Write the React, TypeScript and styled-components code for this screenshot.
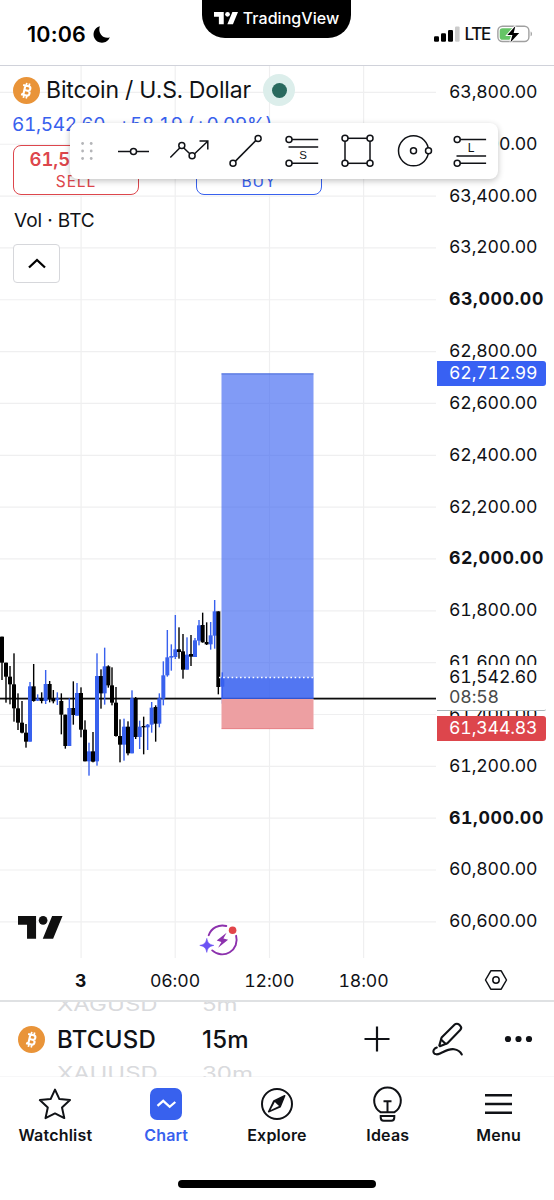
import React from "react";
import styled, { createGlobalStyle } from "styled-components";

const BLUE = "#3861ee";
const RED = "#dd464c";
const INK = "#101216";

const GlobalStyle = createGlobalStyle`
  *, *::before, *::after { box-sizing: border-box; }
  html, body { margin: 0; padding: 0; background: #fff; }
  body {
    font-family: Inter, "Liberation Sans", sans-serif;
    font-variant-numeric: tabular-nums;
    color: ${INK};
  }
  svg { display: block; flex: none; overflow: visible; }
`;

/* ---------- screen ---------- */

const Screen = styled.div`
  width: 554px;
  height: 1200px;
  display: flex;
  flex-direction: column;
  overflow: hidden;
  background: #fff;
`;

const StatusBar = styled.header`
  height: 66px;
  display: flex;
  justify-content: space-between;
  align-items: flex-start;
  padding: 0 21px 0 27px;
  border-bottom: 1px solid #d0d2da;
`;

const StatusSide = styled.div<{ $gap: number; $end?: boolean }>`
  display: flex;
  align-items: center;
  justify-content: ${(p) => (p.$end ? "flex-end" : "flex-start")};
  gap: ${(p) => p.$gap}px;
  height: 68px;
  width: 118px;
  flex: none;
`;

const Clock = styled.span`
  font-size: 21.5px;
  font-weight: 600;
  font-variant-numeric: normal;
  letter-spacing: 0.2px;
  width: 59px;
  color: #000;
`;

const Network = styled.span`
  font-size: 17px;
  font-weight: 500;
  letter-spacing: -1.3px;
  color: #111;
  margin-right: 2px;
`;

const Island = styled.div`
  width: 149px;
  height: 38px;
  margin-right: 7px;
  border-radius: 0 0 23px 23px;
  background: #000;
  color: #fff;
  display: flex;
  align-items: center;
  justify-content: center;
  gap: 5px;
  padding-bottom: 2px;
  font-size: 16px;
  font-weight: 500;
  letter-spacing: 0.05px;
  white-space: nowrap;
`;

/* ---------- chart ---------- */

const ChartPanel = styled.main`
  height: 936px;
  display: grid;
  grid-template-columns: 437px 117px;
  grid-template-rows: 892px 44px;
  border-bottom: 2px solid #dfe1e3;
`;

const Plot = styled.section`
  position: relative;
`;

const Legend = styled.div`
  position: absolute;
  top: 0;
  left: 0;
  width: 437px;
  padding: 8px 0 0 13px;
  display: flex;
  flex-direction: column;
  align-items: flex-start;
`;

const TitleRow = styled.div`
  display: flex;
  align-items: center;
  height: 32px;
`;

const Title = styled.h1`
  margin: 0 12px 0 6px;
  width: 205px;
  font-size: 23px;
  font-weight: 400;
  letter-spacing: -0.15px;
  white-space: nowrap;
`;

const Status = styled.span`
  width: 32px;
  height: 32px;
  border-radius: 50%;
  background: #dceeeb;
  display: grid;
  place-items: center;
  &::after {
    content: "";
    width: 15px;
    height: 15px;
    border-radius: 50%;
    background: #29695e;
  }
`;

const QuoteRow = styled.div`
  display: flex;
  gap: 12px;
  align-items: center;
  height: 36px;
  padding-top: 1px;
  margin-left: -1px;
  font-size: 19px;
  letter-spacing: -0.35px;
  color: ${BLUE};
  white-space: nowrap;
`;

const Quote = styled.span<{ $w: number }>`
  width: ${(p) => p.$w}px;
`;

const OrderRow = styled.div`
  display: flex;
  gap: 57px;
  margin-top: 3px;
`;

const OrderButton = styled.button<{ $color: string }>`
  width: 126px;
  height: 50px;
  padding: 2px 0 0;
  border: 1.5px solid ${(p) => p.$color};
  border-radius: 8px;
  background: #fff;
  color: ${(p) => p.$color};
  font-family: inherit;
  font-variant-numeric: inherit;
  display: flex;
  flex-direction: column;
  align-items: center;
  b { font-size: 18.5px; line-height: 23px; font-weight: 600; letter-spacing: -0.1px; }
  span { font-size: 15.5px; line-height: 21px; letter-spacing: 0.9px; }
`;

const Indicator = styled.div`
  height: 49px;
  line-height: 51px;
  font-size: 19px;
  margin-left: 1px;
`;

const Collapse = styled.button`
  width: 47px;
  height: 39px;
  padding: 0;
  border: 1.5px solid #d6d7db;
  border-radius: 4px;
  background: #fff;
  display: grid;
  place-items: center;
`;

const Toolbar = styled.div`
  position: absolute;
  z-index: 2;
  top: 57px;
  left: 69.5px;
  width: 428px;
  height: 56px;
  border-radius: 8px;
  background: #fff;
  box-shadow: 0 2px 6px rgba(0, 0, 0, 0.24);
  display: flex;
`;

const Grip = styled.div`
  width: 35px;
  display: grid;
  place-items: center;
`;

const Tool = styled.button`
  width: 56px;
  padding: 0;
  border: 0;
  background: none;
  display: grid;
  place-items: center;
`;

const Watermark = styled.div`
  position: absolute;
  left: 17.5px;
  bottom: 19px;
`;

const EventBadge = styled.div`
  position: absolute;
  left: 198px;
  bottom: -2px;
`;

const PriceAxis = styled.aside`
  position: relative;
  display: flex;
  flex-direction: column;
  overflow: hidden;
`;

const Price = styled.span<{ $bold: boolean }>`
  flex: none;
  height: 51.84px;
  line-height: 51.2px;
  padding-left: 12px;
  font-size: 17.7px;
  letter-spacing: ${(p) => (p.$bold ? 0.6 : -0.15)}px;
  font-weight: ${(p) => (p.$bold ? 700 : 400)};
  white-space: nowrap;
`;

const PriceTag = styled.span<{ $top: number; $bg: string }>`
  position: absolute;
  left: 0;
  top: ${(p) => p.$top}px;
  width: 109px;
  height: 25px;
  line-height: 24px;
  padding-left: 12px;
  border-radius: 0 3px 3px 0;
  background: ${(p) => p.$bg};
  color: #fff;
  font-size: 17.7px;
  letter-spacing: -0.15px;
`;

const LastPrice = styled.div`
  position: absolute;
  left: 0;
  top: 599px;
  width: 109px;
  height: 46px;
  padding: 1.5px 0 0 12px;
  background: #fff;
  border-bottom: 1px solid #aab5b8;
  border-radius: 0 0 2px 0;
  font-size: 17.7px;
  line-height: 20.5px;
  letter-spacing: -0.15px;
  display: flex;
  flex-direction: column;
  span:last-child { color: #4a4a4a; }
`;

const TimeAxis = styled.div`
  display: flex;
  padding-left: 33.5px;
`;

const Time = styled.span<{ $bold?: boolean }>`
  width: 94.3px;
  text-align: center;
  line-height: 46px;
  font-size: 17.7px;
  letter-spacing: -0.1px;
  font-weight: ${(p) => (p.$bold ? 700 : 400)};
`;

const AxisSettings = styled.div`
  display: grid;
  place-items: center;
`;

/* ---------- symbol picker ---------- */

const PickerBar = styled.section`
  height: 75px;
  display: flex;
  align-items: center;
  padding-left: 18px;
  border-bottom: 1px solid #f7f7f8;
`;

const Wheel = styled.div<{ $w: number; $ml: number }>`
  width: ${(p) => p.$w}px;
  height: 75px;
  padding-top: 2px;
  margin-left: ${(p) => p.$ml}px;
  overflow: hidden;
  display: flex;
  flex-direction: column;
  justify-content: center;
`;

const WheelItem = styled.span<{ $active?: boolean }>`
  flex: none;
  height: 34.5px;
  line-height: 34.5px;
  font-size: 24px;
  font-variant-numeric: normal;
  font-weight: ${(p) => (p.$active ? 500 : 400)};
  letter-spacing: ${(p) => (p.$active ? 0.25 : 0)}px;
  color: ${(p) => (p.$active ? INK : "#d9dadd")};
  transform: scaleY(${(p) => (p.$active ? 1 : 0.75)});
`;

const Actions = styled.div`
  margin-left: auto;
  display: flex;
  align-items: center;
  padding-right: 21px;
  gap: 41.3px;
`;

/* ---------- tab bar ---------- */

const TabBar = styled.nav`
  display: grid;
  grid-template-columns: repeat(5, 1fr);
  height: 103px;
`;

const Tab = styled.a<{ $active?: boolean }>`
  display: flex;
  flex-direction: column;
  align-items: center;
  padding-top: 10px;
  gap: 4px;
  font-size: 16px;
  line-height: 20px;
  font-weight: 600;
  letter-spacing: 0.2px;
  color: ${(p) => (p.$active ? BLUE : INK)};
`;

const HomeIndicator = styled.div`
  width: 198px;
  height: 8px;
  margin: 0 auto;
  border-radius: 4px;
  background: #000;
`;

/* ---------- icons ---------- */

const line = { fill: "none", stroke: INK, strokeWidth: 1.5 } as const;

const BrandMark = ({ width, color }: { width: number; color: string }) => (
  <svg width={width} height={(width * 68) / 133} viewBox="0 0 133 68" fill={color}>
    <path d="M0 0h54v68H27V26H0zM102 0h31l-28 68H74z" />
    <circle cx="75" cy="13" r="13" />
  </svg>
);

const BitcoinIcon = () => (
  <svg width="27" height="27" viewBox="0 0 27 27">
    <circle cx="13.5" cy="13.5" r="13.5" fill="#e99439" />
    <g transform="rotate(13 13.5 13.5)" fill="none" stroke="#fff" strokeWidth="2.1">
      <path d="M9 8.9h5.6a2.2 2.2 0 0 1 0 4.5H11.3M14.6 13.4a2.5 2.5 0 0 1 0 5H9M11.3 8.9v9.5" />
      <path d="M12.1 6v3M15 6v3M12.1 18.4v3M15 18.4v3" strokeWidth="1.7" />
    </g>
  </svg>
);

const Moon = () => (
  <svg width="17" height="17" viewBox="0 0 17 17">
    <path d="M6.8.2A8.4 8.4 0 1 0 16.8 11.2C11.500 13.400 4.300 8.200 6.800.2z" fill="#000" />
  </svg>
);

const Signal = () => (
  <svg width="26" height="16" viewBox="0 0 26 16" fill="#000">
    <rect x="0" y="10.3" width="5" height="5.5" rx="1.2" />
    <rect x="7" y="7.3" width="5" height="8.5" rx="1.2" />
    <rect x="14" y="4" width="5" height="11.8" rx="1.2" />
    <rect x="21" y="0.4" width="4.6" height="15.4" rx="1.2" fill="#cbcbcb" />
  </svg>
);

const Battery = () => (
  <svg width="36" height="18" viewBox="0 0 36 18">
    <rect x="0.9" y="1.3" width="31" height="15.2" rx="4.5" fill="#fff" stroke="#a0a0a0" strokeWidth="1.4" />
    <path d="M33.6 6.5c1.8.5 1.8 4.3 0 4.8z" fill="#a0a0a0" />
    <path d="M5.5 3.2H17L12.5 14.7h-7a2.8 2.8 0 0 1-2.8-2.8V6a2.8 2.8 0 0 1 2.8-2.8z" fill="#65c466" />
    <path d="M18.4.9 10.3 10h5.1l-2 7.5 8.8-9.6h-5.5z" fill="#000" stroke="#fff" strokeWidth="1.8" paintOrder="stroke" />
  </svg>
);

const Knob = ({ x, y }: { x: number; y: number }) => (
  <circle cx={x} cy={y} r="3" fill="#fff" stroke={INK} strokeWidth="1.5" />
);

const GripDots = () => (
  <svg width="12" height="18" viewBox="0 0 12 18" fill="#b4b5b8">
    {[1.5, 9, 16.5].map((y) => (
      <React.Fragment key={y}>
        <circle cx="1.6" cy={y} r="1.4" />
        <circle cx="10.2" cy={y} r="1.4" />
      </React.Fragment>
    ))}
  </svg>
);

const toolIcons: { name: string; art: React.ReactNode }[] = [
  {
    name: "Horizontal line",
    art: (
      <>
        <path d="M5 20.5h31" {...line} />
        <Knob x={20.5} y={20.5} />
      </>
    ),
  },
  {
    name: "Path",
    art: (
      <>
        <path d="M1.3 26.5 12.7 15l10.5 10L38.5 10.5M30.5 10h8.3v8.5" {...line} />
        <Knob x={12.8} y={14.5} />
        <Knob x={23.1} y={24.8} />
      </>
    ),
  },
  {
    name: "Trend line",
    art: (
      <>
        <path d="M8 32.6 32.8 7.6" {...line} />
        <Knob x={8} y={32.3} />
        <Knob x={33.1} y={7.4} />
      </>
    ),
  },
  {
    name: "Short position",
    art: (
      <>
        <path d="M8.2 8.5h29M7.500 16h29.7M8.2 32.3h29" {...line} />
        <Knob x={8} y={8.5} />
        <Knob x={8} y={32.3} />
        <text x="22.2" y="28.2" textAnchor="middle" fontSize="11.5" fontWeight="500" fill={INK}>S</text>
      </>
    ),
  },
  {
    name: "Rectangle",
    art: (
      <>
        <rect x="8" y="7.3" width="25" height="25" {...line} />
        <Knob x={8} y={7.3} />
        <Knob x={33} y={7.3} />
        <Knob x={8} y={32.3} />
        <Knob x={33} y={32.3} />
      </>
    ),
  },
  {
    name: "Circle",
    art: (
      <>
        <circle cx="20.5" cy="19.8" r="15" {...line} />
        <Knob x={20.5} y={19.8} />
        <Knob x={35.5} y={19.8} />
      </>
    ),
  },
  {
    name: "Long position",
    art: (
      <>
        <path d="M8.300 8.5h28.8M7.500 25h29.6M8.300 32.3h28.8" {...line} />
        <Knob x={8.2} y={8.5} />
        <Knob x={8.2} y={32.3} />
        <text x="22.2" y="21" textAnchor="middle" fontSize="12" fontWeight="500" fill={INK}>L</text>
      </>
    ),
  },
];

const EventIcon = () => (
  <svg width="44" height="40" viewBox="0 0 44 40">
    <g fill="none" stroke="#8c31ad" strokeWidth="1.9">
      <path d="M10.7 15.2A14.5 14.5 0 0 1 28.3 6" strokeLinecap="round" />
      <path d="M38.1 15.8A14.5 14.5 0 0 1 14.2 30.4" strokeLinecap="round" />
    </g>
    <path d="M28.6 12.8 18.7 20.6l4.7 1.4-3.3 5.8 10-8-4.7-1.3z" fill="#8c31ad" />
    <circle cx="34.6" cy="10.2" r="3.8" fill="#e2454a" />
    <path d="M8.8 18.4c1 4.6 2.4 6 7 7-4.6 1-6 2.4-7 7-1-4.6-2.4-6-7-7 4.6-1 6-2.4 7-7z" fill="#6b52f4" stroke="#6b52f4" strokeWidth=".6" />
  </svg>
);

const HexIcon = () => (
  <svg width="24" height="22" viewBox="0 0 24 22" {...line}>
    <path d="M6.8 1.8h10.4L22.5 11l-5.3 9.2H6.8L1.5 11z" strokeLinejoin="round" />
    <circle cx="12" cy="11" r="3.2" />
  </svg>
);

const PlusIcon = () => (
  <svg width="26" height="26" viewBox="0 0 26 26">
    <path d="M13 .5v25M.5 13h25" {...line} strokeWidth={2.2} />
  </svg>
);

const PenIcon = () => (
  <svg width="32" height="34" viewBox="0 0 32 34">
    <g {...line} strokeWidth={2.1} strokeLinejoin="round" strokeLinecap="round">
      <path d="M9.6 15.5 22.7 2.6a3 3 0 0 1 4.3 0l1.2 1.2a3 3 0 0 1 0 4.2L15.4 21.3l-7.5 2.9-.6-.6z" />
      <path d="m9 17.5 4.8 4.4" />
      <path d="M4.8 25.6c-2.8 1-4 3-3.2 5 1 2.4 4 2 7 .6 4.4-2.1 8.4-4.7 13.4-4 3.8.5 6.5 2.6 7.8 5.3" />
    </g>
  </svg>
);

const DotsIcon = () => (
  <svg width="28" height="8" viewBox="0 0 28 8" fill={INK}>
    <circle cx="3" cy="4" r="3.1" />
    <circle cx="13.5" cy="4" r="3.1" />
    <circle cx="24" cy="4" r="3.1" />
  </svg>
);

const StarIcon = () => (
  <svg width="34" height="34" viewBox="0 0 34 34">
    <path d="m17 2.6 4.4 9.5 10.6 1-8 7.4 2.3 10.6L17 26.4l-9.5 4.7 2.3-10.6-8-7.4 10.8-1z" {...line} strokeWidth={2} strokeLinejoin="round" />
  </svg>
);

const ChartIcon = () => (
  <svg width="34" height="34" viewBox="0 0 34 34">
    <rect x="1" y="1" width="32" height="32" rx="7" fill={BLUE} />
    <path d="m8.5 18.8 5.7-5 6.5 6 5.6-4.8" fill="none" stroke="#fff" strokeWidth="2.3" />
  </svg>
);

const CompassIcon = () => (
  <svg width="34" height="34" viewBox="0 0 34 34">
    <circle cx="17" cy="17" r="15" {...line} strokeWidth={2} />
    <path d="m8.6 24.8 5.3-10.9 10.8-5.2-4.5 11z" fill={INK} stroke={INK} strokeWidth="1.5" strokeLinejoin="round" />
    <path d="m10.6 23 4.2-8 4.2 4z" fill="#fff" />
  </svg>
);

const BulbIcon = () => (
  <svg width="34" height="34" viewBox="0 0 34 34">
    <g {...line} strokeWidth={2}>
      <path d="M9.5 25.2A13.3 13.3 0 1 1 23.5 25.2zM12.5 14.2h8M16.5 14.2v11" />
      <path d="M9.7 29h13.6v1.5c0 2.2-.8 3.2-3 3.2h-7.6c-2.2 0-3-1-3-3.2z" />
    </g>
  </svg>
);

const MenuIcon = () => (
  <svg width="34" height="34" viewBox="0 0 34 34">
    <path d="M3 8.3h27M3 17h27M3 25.8h27" {...line} strokeWidth={2.4} />
  </svg>
);

/* ---------- chart data ---------- */

// [x, wick top, wick bottom, body top, body bottom, rising], in thirds of a pixel
type Candle = [number, number, number, number, number, 0 | 1];
const candles: Candle[] = [
  [6, 140, 270, 140, 218, 0], [18, 218, 338, 218, 260, 0], [30, 228, 343, 260, 283, 0],
  [42, 190, 395, 283, 355, 0], [54, 310, 420, 355, 398, 0], [66, 333, 430, 398, 428, 0],
  [78, 402, 473, 428, 455, 0], [90, 276, 455, 289, 455, 1], [101, 222, 335, 289, 333, 0],
  [113, 313, 333, 326, 332, 1], [125, 307, 340, 324, 333, 0], [137, 240, 342, 282, 333, 1],
  [149, 273, 337, 282, 328, 0], [160, 300, 340, 326, 334, 0], [172, 307, 345, 325, 330, 1],
  [184, 310, 433, 333, 374, 0], [196, 374, 476, 374, 468, 0], [208, 325, 468, 354, 468, 1],
  [220, 274, 404, 354, 375, 0], [231, 279, 377, 309, 377, 1], [243, 292, 442, 309, 419, 0],
  [255, 391, 514, 419, 514, 0], [267, 458, 557, 484, 514, 1], [279, 426, 517, 484, 515, 0],
  [291, 190, 527, 258, 514, 1], [303, 238, 356, 258, 310, 0], [314, 173, 344, 229, 310, 1],
  [325, 226, 293, 229, 286, 0], [336, 232, 346, 286, 338, 0], [348, 291, 440, 338, 438, 0],
  [360, 388, 517, 438, 464, 0], [372, 386, 512, 410, 464, 1], [384, 394, 496, 410, 490, 0],
  [396, 301, 490, 325, 490, 1], [407, 321, 447, 325, 441, 0], [419, 392, 477, 410, 441, 1],
  [431, 380, 493, 408, 412, 0], [443, 402, 480, 404, 412, 1], [455, 336, 428, 353, 404, 1],
  [467, 346, 455, 351, 401, 0], [478, 310, 412, 325, 401, 1], [490, 214, 346, 256, 326, 1],
  [502, 120, 260, 202, 256, 1], [514, 163, 242, 198, 203, 1], [526, 75, 207, 178, 201, 1],
  [537, 112, 206, 178, 186, 0], [549, 132, 266, 184, 239, 0], [561, 142, 239, 194, 239, 1],
  [573, 135, 228, 192, 200, 0], [585, 144, 201, 151, 201, 1], [597, 90, 166, 106, 152, 1],
  [608, 68, 158, 105, 157, 0], [620, 97, 165, 156, 163, 0], [632, 96, 179, 136, 163, 1],
  [644, 30, 176, 64, 137, 1], [655, 64, 313, 64, 291, 0], [667, 247, 341, 262, 290, 1],
];

const CANDLE_TOP = 524;
const gridRows = Array.from({ length: 17 }, (_, i) => 26.4 + i * 51.84);
const gridColumns = [81.1, 175.2, 269.5, 363.6];
const prices = Array.from({ length: 17 }, (_, i) => 63800 - i * 200);

const PriceChart = () => (
  <svg width="437" height="892" viewBox="0 0 437 892">
    <g stroke="#efeff0" strokeWidth="1.2">
      {gridRows.map((y) => <line key={y} x1="0" x2="436" y1={y} y2={y} />)}
      {gridColumns.map((x) => <line key={x} x1={x} x2={x} y1="0" y2="892" />)}
    </g>
    <rect x="0" y="631.7" width="436" height="1.8" fill="#0c0c0c" />
    {candles.map(([x, high, low, top, bottom, rising]) => (
      <g key={x} fill={rising ? BLUE : "#000"}>
        <rect x={x / 3 - 0.7} y={CANDLE_TOP + high / 3} width="1.4" height={(low - high) / 3} />
        <rect x={x / 3 - 2} y={CANDLE_TOP + top / 3} width="4" height={(bottom - top) / 3} />
      </g>
    ))}
    <rect x="221.5" y="307.4" width="92" height="325.6" fill="#3861f0" fillOpacity="0.63" />
    <rect x="221.5" y="611.5" width="92" height="21.5" fill="#3861f0" fillOpacity="0.64" />
    <rect x="221.5" y="307.4" width="92" height="1" fill="#3157cf" fillOpacity="0.7" />
    <rect x="221.5" y="633" width="92" height="30" fill="#fff" />
    <rect x="221.5" y="633" width="92" height="30" fill="#dd464c" fillOpacity="0.52" />
    <rect x="221.5" y="662.3" width="92" height="0.9" fill="#dd464c" fillOpacity="0.4" />
    <line x1="219" x2="313.5" y1="611.5" y2="611.5" stroke="#fff" strokeWidth="1.3" strokeDasharray="1.6 2.6" />
  </svg>
);

export default function App() {
  return (
    <Screen>
      <GlobalStyle />
      <StatusBar>
        <StatusSide $gap={7}>
          <Clock>10:06</Clock>
          <Moon />
        </StatusSide>
        <Island>
          <BrandMark width={24} color="#fff" />
          TradingView
        </Island>
        <StatusSide $gap={5} $end>
          <Signal />
          <Network>LTE</Network>
          <Battery />
        </StatusSide>
      </StatusBar>

      <ChartPanel>
        <Plot>
          <PriceChart />
          <Legend>
            <TitleRow>
              <BitcoinIcon />
              <Title>Bitcoin / U.S. Dollar</Title>
              <Status />
            </TitleRow>
            <QuoteRow>
              <Quote $w={94}>61,542.60</Quote>
              <Quote $w={154}>+58.19 (+0.09%)</Quote>
            </QuoteRow>
            <OrderRow>
              <OrderButton $color={RED}>
                <b>61,542.60</b>
                <span>SELL</span>
              </OrderButton>
              <OrderButton $color={BLUE}>
                <b>61,542.61</b>
                <span>BUY</span>
              </OrderButton>
            </OrderRow>
            <Indicator>Vol · BTC</Indicator>
            <Collapse aria-label="Collapse legend">
              <svg width="18" height="11" viewBox="0 0 18 11">
                <path d="M1 9.5 9 2l8 7.5" fill="none" stroke="#000" strokeWidth="2.3" />
              </svg>
            </Collapse>
          </Legend>
          <Toolbar>
            <Grip><GripDots /></Grip>
            {toolIcons.map((tool) => (
              <Tool key={tool.name} aria-label={tool.name}>
                <svg width="40" height="40" viewBox="0 0 40 40">{tool.art}</svg>
              </Tool>
            ))}
          </Toolbar>
          <Watermark><BrandMark width={44.5} color="#101010" /></Watermark>
          <EventBadge><EventIcon /></EventBadge>
        </Plot>

        <PriceAxis>
          {prices.map((price) => (
            <Price key={price} $bold={price % 1000 === 0}>
              {price.toLocaleString("en-US", { minimumFractionDigits: 2 })}
            </Price>
          ))}
          <PriceTag $top={295} $bg="#3861f3">62,712.99</PriceTag>
          <LastPrice>
            <span>61,542.60</span>
            <span>08:58</span>
          </LastPrice>
          <PriceTag $top={650} $bg={RED}>61,344.83</PriceTag>
        </PriceAxis>

        <TimeAxis>
          <Time $bold>3</Time>
          <Time>06:00</Time>
          <Time>12:00</Time>
          <Time>18:00</Time>
        </TimeAxis>
        <AxisSettings><HexIcon /></AxisSettings>
      </ChartPanel>

      <PickerBar>
        <BitcoinIcon />
        <Wheel $w={108} $ml={12}>
          <WheelItem>XAGUSD</WheelItem>
          <WheelItem $active>BTCUSD</WheelItem>
          <WheelItem>XAUUSD</WheelItem>
        </Wheel>
        <Wheel $w={60} $ml={37}>
          <WheelItem>5m</WheelItem>
          <WheelItem $active>15m</WheelItem>
          <WheelItem>30m</WheelItem>
        </Wheel>
        <Actions>
          <PlusIcon />
          <PenIcon />
          <DotsIcon />
        </Actions>
      </PickerBar>

      <TabBar>
        <Tab><StarIcon />Watchlist</Tab>
        <Tab $active><ChartIcon />Chart</Tab>
        <Tab><CompassIcon />Explore</Tab>
        <Tab><BulbIcon />Ideas</Tab>
        <Tab><MenuIcon />Menu</Tab>
      </TabBar>
      <HomeIndicator />
    </Screen>
  );
}
